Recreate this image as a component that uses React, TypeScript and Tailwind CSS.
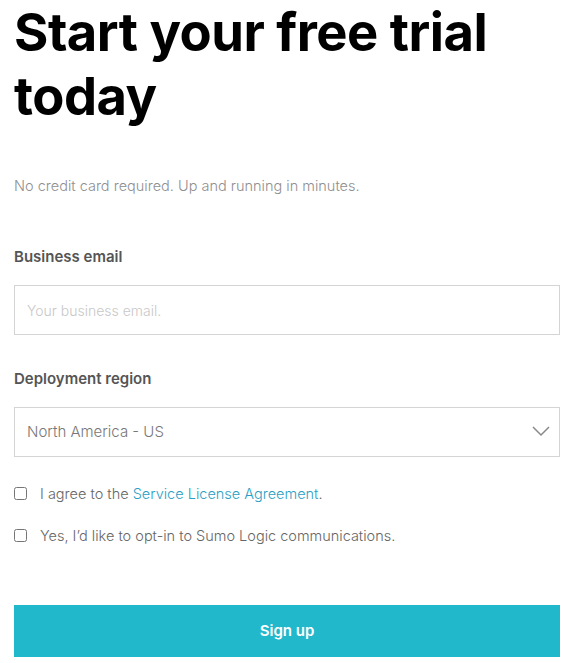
import { useState } from 'react';

export default function App() {
  const [agree, setAgree] = useState(false);
  const [optIn, setOptIn] = useState(false);
  const [region, setRegion] = useState("North America - US");

  return (
    <div className="bg-white px-[14px] font-['Inter',sans-serif] w-[574px]">
      <h1 className="text-[52.5px] leading-[64px] font-bold text-black tracking-[-0.5px]">
        Start your free trial today
      </h1>
      <p className="mt-[47px] text-[14.5px] font-light text-[#8f8f8f]">
        No credit card required. Up and running in minutes.
      </p>

      <form className="mt-[49px]" onSubmit={(e) => e.preventDefault()}>
        <label className="block text-[15px] font-semibold text-[#555]">Business email</label>
        <input
          className="mt-[17px] block w-full h-[50px] border border-[#d4d4d4] px-[12px] text-[14px] font-light text-[#666] placeholder:text-[#c8c8c8] outline-none"
          placeholder="Your business email."
        />

        <label className="block mt-[33px] text-[15px] font-semibold text-[#555]">Deployment region</label>
        <div className="relative mt-[16px]">
          <select
            className="block w-full h-[50px] appearance-none border border-[#d4d4d4] bg-white px-[12px] text-[15px] font-light text-[#777] outline-none"
            value={region}
            onChange={(e) => setRegion(e.target.value)}
          >
            {["North America - US", "Europe - EU", "Asia Pacific - AU", "Asia Pacific - JP"].map((r) => (
              <option key={r} value={r}>{r}</option>
            ))}
          </select>
          <svg className="absolute right-[10px] top-[18px] pointer-events-none" width="18" height="12" viewBox="0 0 18 12">
            <path d="M1 2l8 8 8-8" fill="none" stroke="#888" strokeWidth="1.5" />
          </svg>
        </div>

        <label className="flex items-center gap-[13px] mt-[26px] text-[14.5px] font-light text-[#666]">
          <input type="checkbox" className="w-[13px] h-[13px]" checked={agree} onChange={(e) => setAgree(e.target.checked)} />
          <span>I agree to the <a href="#" className="text-[#2a9fc4]">Service License Agreement</a>.</span>
        </label>
        <label className="flex items-center gap-[13px] mt-[20px] text-[14.5px] font-light text-[#666]">
          <input type="checkbox" className="w-[13px] h-[13px]" checked={optIn} onChange={(e) => setOptIn(e.target.checked)} />
          <span>Yes, I’d like to opt-in to Sumo Logic communications.</span>
        </label>

        <button type="submit" className="mt-[59px] block w-full h-[52px] bg-[#22b8cc] text-white text-[15px] font-semibold">
          Sign up
        </button>
      </form>
    </div>
  );
}
